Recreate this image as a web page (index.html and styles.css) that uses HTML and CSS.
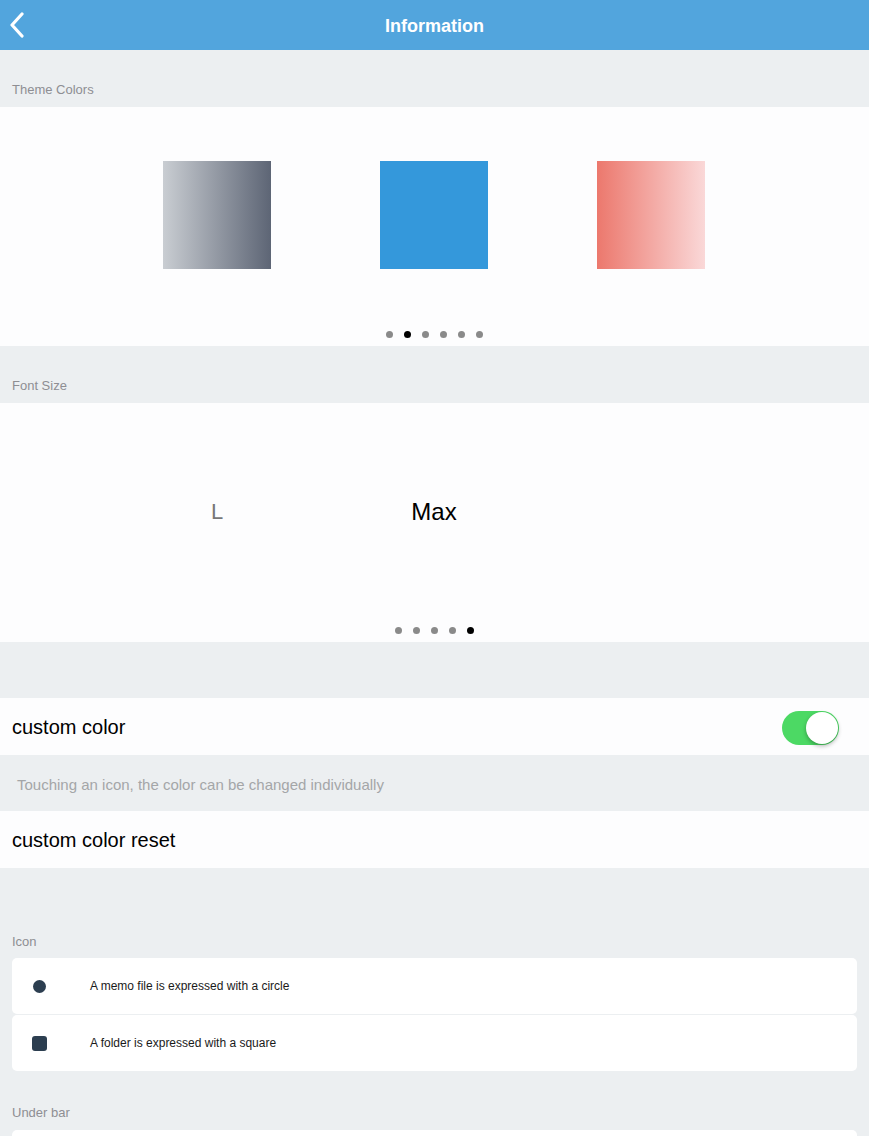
FILE: index.html
```html
<!DOCTYPE html>
<html lang="en">
<head>
  <meta charset="UTF-8" />
  <meta name="viewport" content="width=device-width, initial-scale=1.0"/>
  <title>Information</title>
  <link rel="stylesheet" href="styles.css">
</head>
<body>
  <header class="nav-bar">
    <svg class="back-icon" width="26" height="26" viewBox="0 0 26 26">
      <path d="M19 2 L9 13 L19 24" fill="none" stroke="#fff" stroke-width="3.2" stroke-linecap="round" stroke-linejoin="round"/>
    </svg>
    <h1>Information</h1>
  </header>

  <div class="section-label">Theme Colors</div>
  <section class="panel">
    <div class="carousel">
      <div class="swatch swatch-gray"></div>
      <div class="swatch swatch-blue"></div>
      <div class="swatch swatch-red"></div>
    </div>
    <div class="dots">
      <span></span><span class="active"></span><span></span><span></span><span></span><span></span>
    </div>
  </section>

  <div class="section-label">Font Size</div>
  <section class="panel">
    <div class="carousel">
      <div class="size-item size-l">L</div>
      <div class="size-item size-max">Max</div>
      <div class="size-item"></div>
    </div>
    <div class="dots">
      <span></span><span></span><span></span><span></span><span class="active"></span>
    </div>
  </section>

  <div class="spacer"></div>

  <div class="row">
    <span>custom color</span>
    <div class="toggle"><div class="knob"></div></div>
  </div>
  <div class="note">Touching an icon, the color can be changed individually</div>
  <div class="row">
    <span>custom color reset</span>
  </div>

  <div class="section-label tall">Icon</div>
  <div class="card">
    <span class="shape circle"></span>
    <span>A memo file is expressed with a circle</span>
  </div>
  <div class="card">
    <span class="shape square"></span>
    <span>A folder is expressed with a square</span>
  </div>

  <div class="section-label under">Under bar</div>
  <div class="card"></div>
</body>
</html>
```

FILE: styles.css
```css
* {
  box-sizing: border-box;
}

body {
  margin: 0;
  font-family: 'Liberation Sans', Helvetica, Arial, sans-serif;
  background-color: #eceff1;
  color: #000;
  overflow: hidden;
}

.nav-bar {
  height: 50px;
  padding-top: 2px;
  background-color: #52a5dd;
  display: flex;
  align-items: center;
  justify-content: center;
  position: relative;
}

.nav-bar h1 {
  margin: 0;
  color: #fff;
  font-size: 18px;
  font-weight: bold;
}

.back-icon {
  position: absolute;
  left: 3px;
  top: 12px;
}

.section-label {
  height: 57px;
  display: flex;
  align-items: flex-end;
  padding: 0 12px 9px;
  font-size: 13px;
  line-height: 16px;
  color: #8e8e93;
}

.section-label.tall {
  height: 90px;
  padding-bottom: 8px;
}

.section-label.under {
  height: 58px;
  padding-bottom: 9px;
}

.panel {
  background-color: #fdfdfe;
  height: 239px;
  padding-top: 54px;
  position: relative;
}

.carousel {
  display: grid;
  grid-template-columns: repeat(3, 217px);
  justify-content: center;
  justify-items: center;
  align-items: center;
  height: 108px;
  margin-left: -1px;
}

.swatch {
  width: 108px;
  height: 108px;
}

.swatch-gray {
  background: linear-gradient(to right, #c9cdd2, #5d6575);
}

.swatch-blue {
  background-color: #3498db;
}

.swatch-red {
  background: linear-gradient(to right, #ec786d, #fad8d8);
}

.size-item {
  line-height: 1;
  padding-top: 2px;
}

.size-l {
  font-size: 22px;
  color: #777;
}

.size-max {
  font-size: 24px;
  color: #000;
}

.dots {
  position: absolute;
  left: 0;
  right: 0;
  bottom: 8px;
  display: flex;
  justify-content: center;
  gap: 11px;
}

.dots span {
  width: 7px;
  height: 7px;
  border-radius: 50%;
  background-color: #8a8a8a;
}

.dots span.active {
  background-color: #000;
}

.spacer {
  height: 56px;
}

.row {
  height: 57px;
  padding: 2px 30px 0 12px;
  background-color: #fdfdfe;
  display: flex;
  align-items: center;
  justify-content: space-between;
  font-size: 20px;
}

.toggle {
  width: 57px;
  height: 34px;
  border-radius: 17px;
  background-color: #4cd964;
  position: relative;
}

.knob {
  position: absolute;
  right: 1px;
  top: 1px;
  width: 32px;
  height: 32px;
  border-radius: 50%;
  background-color: #fff;
  box-shadow: 0 2px 4px rgba(0, 0, 0, 0.3);
}

.note {
  height: 56px;
  display: flex;
  align-items: center;
  padding: 2px 0 0 17px;
  font-size: 15px;
  color: #a4a6a8;
}

.card {
  margin: 0 12px 1px;
  height: 56px;
  background-color: #fff;
  border-radius: 5px;
  display: flex;
  align-items: center;
  font-size: 12px;
  color: #1a1a1a;
}

.shape {
  width: 78px;
  flex: none;
  display: flex;
  justify-content: center;
  padding-right: 24px;
}

.shape::before {
  content: "";
  display: block;
  background-color: #2c3e50;
}

.circle::before {
  width: 13px;
  height: 13px;
  border-radius: 50%;
}

.square::before {
  width: 15px;
  height: 15px;
  border-radius: 3px;
}
```
